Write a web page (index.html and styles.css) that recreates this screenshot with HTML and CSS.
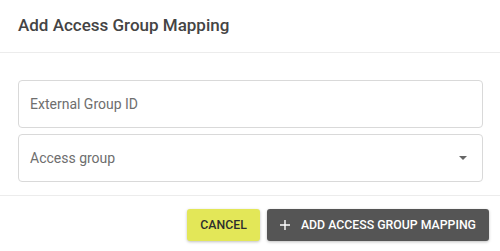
FILE: index.html
```html
<!DOCTYPE html>
<html lang="en">
<head>
<meta charset="utf-8">
<title>Add Access Group Mapping</title>
<link rel="stylesheet" href="styles.css">
</head>
<body>
<div class="dialog">
  <div class="dialog-title">Add Access Group Mapping</div>
  <div class="dialog-content">
    <div class="field"><span class="field-label">External Group ID</span></div>
    <div class="field select"><span class="field-label">Access group</span><span class="arrow"></span></div>
  </div>
  <div class="dialog-actions">
    <button class="btn btn-cancel">CANCEL</button>
    <button class="btn btn-primary"><svg class="plus" width="10" height="10" viewBox="0 0 10 10"><path d="M5 0v10M0 5h10" stroke="#fff" stroke-width="1.4"/></svg><span>ADD ACCESS GROUP MAPPING</span></button>
  </div>
</div>
</body>
</html>
```
FILE: styles.css
```css
html, body {
  margin: 0;
  padding: 0;
  background: #fff;
}
body {
  font-family: Roboto, "Noto Sans", Arial, sans-serif;
  width: 500px;
  height: 251px;
  overflow: hidden;
}
.dialog {
  display: flex;
  flex-direction: column;
}
.dialog-title {
  padding: 13px 18px 15px;
  font-size: 17px;
  line-height: 24px;
  font-weight: 500;
  color: #444444;
  border-bottom: 1px solid #ececec;
}
.dialog-content {
  padding: 27px 17px 13px 18px;
  display: flex;
  flex-direction: column;
  gap: 6px;
  border-bottom: 1px solid #ececec;
}
.field {
  box-sizing: border-box;
  height: 48px;
  border: 1px solid #d9d9d9;
  border-radius: 4px;
  display: flex;
  align-items: center;
  padding: 0 11px;
  position: relative;
}
.field-label {
  font-size: 14px;
  color: #6e6e6e;
  flex: 1;
}
.arrow {
  width: 0;
  height: 0;
  border-left: 4px solid transparent;
  border-right: 4px solid transparent;
  border-top: 4px solid #666;
  margin-right: 4px;
}
.dialog-actions {
  padding: 13px 11px 10px;
  display: flex;
  justify-content: flex-end;
  gap: 7px;
}
.btn {
  height: 32px;
  border: none;
  border-radius: 3px;
  padding: 0 13px;
  font-family: Roboto, "Noto Sans", Arial, sans-serif;
  font-size: 12.3px;
  font-weight: 500;
  letter-spacing: 0;
  display: flex;
  align-items: center;
  box-shadow: 0 1px 3px rgba(0,0,0,0.25);
}
.btn-cancel {
  background: #e3e758;
  color: #2e2e2e;
}
.btn-primary {
  background: #555555;
  color: #fff;
}
.plus {
  margin-right: 11px;
}
```
